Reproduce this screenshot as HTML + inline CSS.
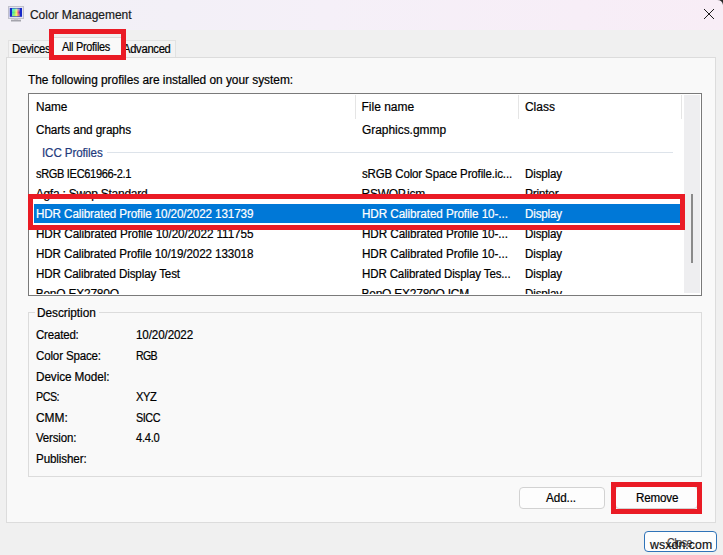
<!DOCTYPE html>
<html><head><meta charset="utf-8"><style>
*{margin:0;padding:0;box-sizing:border-box}
html,body{width:723px;height:555px;overflow:hidden;background:#f0f0f0;font-family:"Liberation Sans",sans-serif;font-size:12px}
.a{position:absolute}
.t{position:absolute;white-space:nowrap;line-height:normal;font-size:12px;-webkit-text-stroke:0.2px currentColor}
#title{left:0;top:0;width:723px;height:30px;background:linear-gradient(90deg,#f2f0f6 0%,#f3f0f7 25%,#f5f0f8 45%,#f7eef7 80%,#f8edf6 100%)}
#panel{left:6px;top:57px;width:710px;height:466px;background:#f9f9f9;border:1px solid #dcdcdc}
.tab{background:#f3f3f3;border:1px solid #e2e2e2;border-bottom:none}
#list{left:28px;top:93px;width:674px;height:203px;background:#fff;border:1px solid #7a7a7a;overflow:hidden}
.red{border:5px solid #ea1b25}
.btn{background:#fdfdfd;border:1px solid #d2d2d2;border-radius:4px}
</style></head><body>
<div id="title" class="a"></div>
<svg class="a" style="left:0;top:0" width="30" height="30" viewBox="0 0 30 30">
<defs><linearGradient id="rb" x1="0" x2="1" y1="0" y2="0"><stop offset="0" stop-color="#30d8c0"/><stop offset="0.3" stop-color="#70e870"/><stop offset="0.55" stop-color="#f0f060"/><stop offset="0.78" stop-color="#e84888"/><stop offset="1" stop-color="#3020b0"/></linearGradient>
<linearGradient id="rb2" x1="0" x2="0" y1="0" y2="1"><stop offset="0" stop-color="#60f0ff" stop-opacity="0.6"/><stop offset="0.5" stop-color="#ffffff" stop-opacity="0"/><stop offset="1" stop-color="#f0f040" stop-opacity="0.5"/></linearGradient></defs>
<rect x="8.5" y="6.5" width="15" height="12" fill="#e2e2ee" stroke="#c0c0cc" stroke-width="1"/>
<rect x="9.8" y="8" width="12.2" height="8.8" fill="#1828c8"/>
<rect x="12" y="8.6" width="8" height="7.6" fill="url(#rb)"/>
<rect x="12" y="8.6" width="8" height="7.6" fill="url(#rb2)"/>
<rect x="14" y="18.5" width="4" height="1.2" fill="#c8c8d0"/>
<rect x="11" y="19.7" width="10" height="1.8" fill="#a4a4ac"/>
</svg>
<svg class="a" style="left:703px;top:8px" width="12" height="12" viewBox="0 0 12 12"><path d="M1 1L11 11M11 1L1 11" stroke="#1a1a1a" stroke-width="1"/></svg>
<svg class="a" style="left:715px;top:0" width="8" height="6" viewBox="0 0 8 6"><path d="M2 0 L8 0 L8 5 A6 6 0 0 0 2 0 Z" fill="#262626"/></svg>
<div id="panel" class="a"></div>
<div class="a tab" style="left:8px;top:40px;width:44px;height:17px"></div>
<div class="a tab" style="left:122px;top:40px;width:54px;height:17px"></div>
<div class="t" style="left:12.20px;top:41.74px;font-size:12px;letter-spacing:-0.254px;transform:scaleX(0.9411);transform-origin:0 0;color:#000;">Devices</div><div class="t" style="left:122.50px;top:41.94px;font-size:12px;letter-spacing:-0.314px;transform:scaleX(0.9341);transform-origin:0 0;color:#000;">Advanced</div>
<div class="a" style="left:51px;top:37px;width:72px;height:21px;background:#f9f9f9;border:1px solid #dcdcdc;border-bottom:none"></div>
<div class="t" style="left:62.20px;top:40.04px;font-size:12px;letter-spacing:-0.319px;transform:scaleX(0.9080);transform-origin:0 0;color:#000;">All Profiles</div>

<div id="list" class="a">
 <div class="a" style="left:0;top:0;width:655px;height:25px;background:#fff"></div>
 <div class="a" style="left:326px;top:1px;width:1px;height:24px;background:#e5e5e5"></div>
 <div class="a" style="left:489px;top:1px;width:1px;height:24px;background:#e5e5e5"></div>
 <div class="a" style="left:652px;top:1px;width:1px;height:24px;background:#e5e5e5"></div>
 <div class="a" style="left:78px;top:58px;width:566px;height:1px;background:#dde3ea"></div>
 <div class="a" style="left:5px;top:110px;width:647px;height:19px;background:#0078d7"></div>
 <div class="a" style="left:0;top:0;width:672px;height:200px;overflow:hidden"><div class="t" style="left:6.70px;top:29.04px;letter-spacing:-0.089px;transform:scaleX(0.9775);transform-origin:0 0;color:#000">Charts and graphs</div><div class="t" style="left:332.50px;top:29.04px;letter-spacing:-0.021px;transform:scaleX(0.9951);transform-origin:0 0;color:#000">Graphics.gmmp</div><div class="t" style="left:6.70px;top:72.94px;letter-spacing:-0.367px;transform:scaleX(0.9212);transform-origin:0 0;color:#000">sRGB IEC61966-2.1</div><div class="t" style="left:332.50px;top:72.94px;letter-spacing:-0.148px;transform:scaleX(0.9601);transform-origin:0 0;color:#000">sRGB Color Space Profile.ic...</div><div class="t" style="left:495.90px;top:72.94px;letter-spacing:-0.140px;transform:scaleX(0.9640);transform-origin:0 0;color:#000">Display</div><div class="t" style="left:6.70px;top:92.94px;letter-spacing:-0.25px;color:#000">Agfa : Swop Standard</div><div class="t" style="left:332.50px;top:92.94px;letter-spacing:-0.25px;color:#000">RSWOP.icm</div><div class="t" style="left:495.90px;top:92.94px;letter-spacing:-0.25px;color:#000">Printer</div><div class="t" style="left:6.70px;top:113.14px;letter-spacing:-0.111px;transform:scaleX(0.9716);transform-origin:0 0;color:#fff">HDR Calibrated Profile 10/20/2022 131739</div><div class="t" style="left:332.50px;top:113.14px;letter-spacing:-0.088px;transform:scaleX(0.9753);transform-origin:0 0;color:#fff">HDR Calibrated Profile 10-...</div><div class="t" style="left:495.90px;top:113.14px;letter-spacing:-0.140px;transform:scaleX(0.9640);transform-origin:0 0;color:#fff">Display</div><div class="t" style="left:6.70px;top:132.94px;letter-spacing:-0.092px;transform:scaleX(0.9761);transform-origin:0 0;color:#000">HDR Calibrated Profile 10/20/2022 111755</div><div class="t" style="left:332.50px;top:132.94px;letter-spacing:-0.088px;transform:scaleX(0.9753);transform-origin:0 0;color:#000">HDR Calibrated Profile 10-...</div><div class="t" style="left:495.90px;top:132.94px;letter-spacing:-0.140px;transform:scaleX(0.9640);transform-origin:0 0;color:#000">Display</div><div class="t" style="left:6.70px;top:152.94px;letter-spacing:-0.111px;transform:scaleX(0.9716);transform-origin:0 0;color:#000">HDR Calibrated Profile 10/19/2022 133018</div><div class="t" style="left:332.50px;top:152.94px;letter-spacing:-0.088px;transform:scaleX(0.9753);transform-origin:0 0;color:#000">HDR Calibrated Profile 10-...</div><div class="t" style="left:495.90px;top:152.94px;letter-spacing:-0.140px;transform:scaleX(0.9640);transform-origin:0 0;color:#000">Display</div><div class="t" style="left:6.70px;top:172.84px;letter-spacing:-0.120px;transform:scaleX(0.9690);transform-origin:0 0;color:#000">HDR Calibrated Display Test</div><div class="t" style="left:332.50px;top:172.84px;letter-spacing:-0.143px;transform:scaleX(0.9621);transform-origin:0 0;color:#000">HDR Calibrated Display Tes...</div><div class="t" style="left:495.90px;top:172.84px;letter-spacing:-0.140px;transform:scaleX(0.9640);transform-origin:0 0;color:#000">Display</div><div class="t" style="left:6.70px;top:192.84px;letter-spacing:-0.25px;color:#000">BenQ EX2780Q</div><div class="t" style="left:332.50px;top:192.84px;letter-spacing:-0.25px;color:#000">BenQ EX2780Q.ICM</div><div class="t" style="left:495.90px;top:192.84px;letter-spacing:-0.140px;transform:scaleX(0.9640);transform-origin:0 0;color:#000">Display</div><div class="t" style="left:13.20px;top:51.94px;letter-spacing:-0.118px;transform:scaleX(0.9680);transform-origin:0 0;color:#233a7c">ICC Profiles</div></div>
 <div class="a" style="left:655px;top:1px;width:16px;height:198px;background:#eeeef0"></div>
 <div class="a" style="left:662px;top:100px;width:2px;height:69px;background:#8a8a8a"></div>
</div>

<div class="a" style="left:28px;top:312px;width:674px;height:165px;border:1px solid #dcdcdc"></div>
<div class="a" style="left:35px;top:305px;width:64px;height:12px;background:#f9f9f9"></div>

<div class="a btn" style="left:519px;top:487px;width:86px;height:22px"></div>
<div class="a btn" style="left:615px;top:486px;width:83px;height:23px"></div>
<div class="a" style="left:644px;top:531px;width:73px;height:21px;background:#fdfdfd;border:1.5px solid #2f73b8;border-radius:4px"></div>

<div class="t" style="left:29.50px;top:7.74px;font-size:12px;letter-spacing:-0.014px;transform:scaleX(0.9968);transform-origin:0 0;color:#1a1a1a;">Color Management</div><div class="t" style="left:28.00px;top:73.14px;font-size:12px;letter-spacing:-0.029px;transform:scaleX(0.9916);transform-origin:0 0;color:#000;">The following profiles are installed on your system:</div><div class="t" style="left:35.60px;top:99.94px;font-size:12px;letter-spacing:-0.083px;transform:scaleX(0.9847);transform-origin:0 0;color:#000;">Name</div><div class="t" style="left:361.50px;top:99.94px;font-size:12px;color:#000;">File name</div><div class="t" style="left:524.90px;top:99.94px;font-size:12px;color:#000;">Class</div><div class="t" style="left:36.70px;top:306.04px;font-size:12px;letter-spacing:-0.045px;transform:scaleX(0.9877);transform-origin:0 0;color:#000;">Description</div><div class="t" style="left:35.80px;top:328.34px;font-size:12px;letter-spacing:-0.179px;transform:scaleX(0.9555);transform-origin:0 0;color:#000;">Created:</div><div class="t" style="left:135.50px;top:328.34px;font-size:12px;letter-spacing:-0.125px;transform:scaleX(0.9697);transform-origin:0 0;color:#000;">10/20/2022</div><div class="t" style="left:35.80px;top:348.94px;font-size:12px;letter-spacing:-0.155px;transform:scaleX(0.9614);transform-origin:0 0;color:#000;">Color Space:</div><div class="t" style="left:135.50px;top:348.94px;font-size:12px;letter-spacing:-0.754px;transform:scaleX(0.8846);transform-origin:0 0;color:#000;">RGB</div><div class="t" style="left:35.80px;top:369.64px;font-size:12px;letter-spacing:-0.083px;transform:scaleX(0.9792);transform-origin:0 0;color:#000;">Device Model:</div><div class="t" style="left:35.80px;top:390.04px;font-size:12px;letter-spacing:-0.547px;transform:scaleX(0.8950);transform-origin:0 0;color:#000;">PCS:</div><div class="t" style="left:135.50px;top:390.04px;font-size:12px;letter-spacing:-0.407px;transform:scaleX(0.9273);transform-origin:0 0;color:#000;">XYZ</div><div class="t" style="left:35.80px;top:410.74px;font-size:12px;letter-spacing:-0.030px;transform:scaleX(0.9944);transform-origin:0 0;color:#000;">CMM:</div><div class="t" style="left:135.50px;top:410.74px;font-size:12px;letter-spacing:-0.518px;transform:scaleX(0.9022);transform-origin:0 0;color:#000;">SICC</div><div class="t" style="left:35.80px;top:430.94px;font-size:12px;letter-spacing:-0.165px;transform:scaleX(0.9563);transform-origin:0 0;color:#000;">Version:</div><div class="t" style="left:135.50px;top:430.94px;font-size:12px;letter-spacing:-0.273px;transform:scaleX(0.9286);transform-origin:0 0;color:#000;">4.4.0</div><div class="t" style="left:35.80px;top:451.64px;font-size:12px;letter-spacing:-0.118px;transform:scaleX(0.9678);transform-origin:0 0;color:#000;">Publisher:</div><div class="t" style="left:545.50px;top:491.44px;font-size:12px;letter-spacing:-0.091px;transform:scaleX(0.9746);transform-origin:0 0;color:#000;">Add...</div><div class="t" style="left:635.80px;top:490.64px;font-size:12px;letter-spacing:-0.172px;transform:scaleX(0.9666);transform-origin:0 0;color:#000;">Remove</div><div class="t" style="left:667.00px;top:536.14px;font-size:12px;letter-spacing:-0.512px;transform:scaleX(0.8888);transform-origin:0 0;color:#444;">Close</div>

<div class="a red" style="left:49px;top:29px;width:77px;height:31px"></div>
<div class="a red" style="left:28px;top:194px;width:657px;height:36px"></div>
<div class="a red" style="left:611px;top:482px;width:91px;height:32px"></div>
<div class="t" style="left:650px;top:538px;font-size:12.3px;color:#111;letter-spacing:0.1px">wsxdn.com</div>
</body></html>
